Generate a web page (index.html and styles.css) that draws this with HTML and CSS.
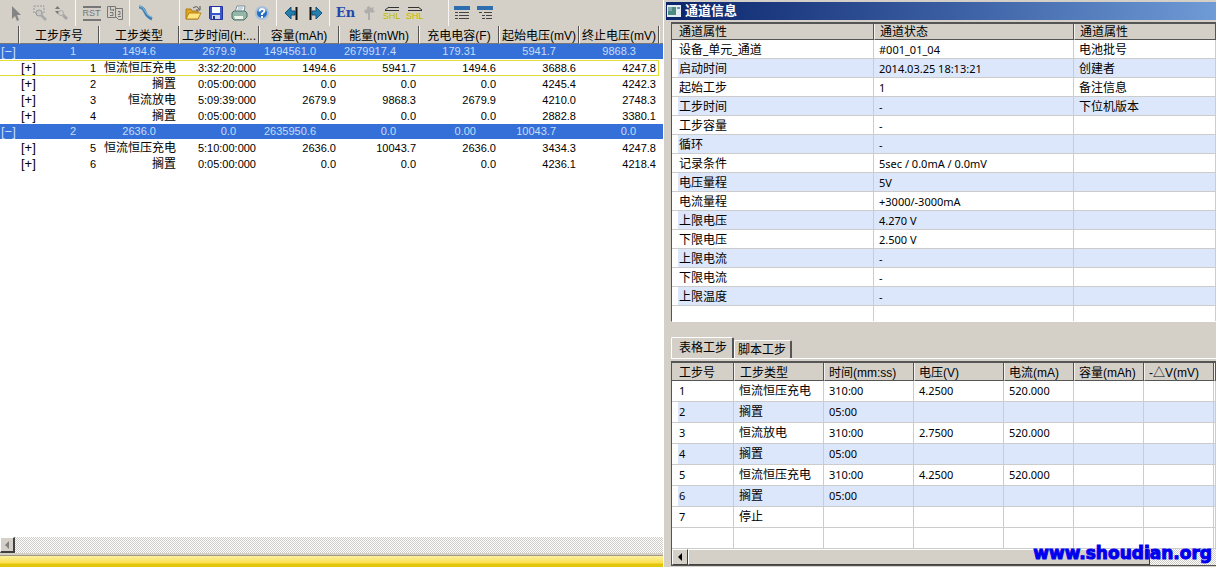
FILE: index.html
```html
<!DOCTYPE html>
<html lang="zh-CN">
<head>
<meta charset="utf-8">
<title>通道信息</title>
<link rel="stylesheet" href="styles.css">
</head>
<body>
<main class="app">
<section class="data-pane">
  <div class="toolbar">
    <div class="group g-select">
      <button aria-label="选择"><svg width="18" height="18"><path d="M5 2v13l3-3 2 5 2-1-2-5h4z" fill="#858585"/></svg></button>
      <button aria-label="区域缩放"><svg width="18" height="18"><path d="M4 2h10v7H4z" fill="none" stroke="#999" stroke-dasharray="2 1"/><circle cx="9" cy="9" r="3" fill="#c8c6c2" stroke="#999"/><path d="M11 11l5 5" stroke="#aaa" stroke-width="3"/></svg></button>
      <button aria-label="缩放"><svg width="18" height="18"><path d="M2 5l2.500-3 2.500 3zM2 7l2.500 3 2.500-3z" fill="#777"/><circle cx="8" cy="9" r="2.500" fill="#d4d0c8" stroke="#aaa"/><path d="M10 11l4 4" stroke="#a5a5a5" stroke-width="3"/></svg></button>
    </div>
    <div class="group g-reset">
      <button aria-label="RST"><span class="rst">RST</span></button>
      <button aria-label="复制"><svg width="18" height="18" fill="none" stroke="#777"><path d="M1.500 2.500h8v11h-8zM9.500 4.500h7v11h-4l-3-3M4.500 3v3H7M4 8.500h3v3H4M7.500 5v2M12 7.500h2v3h-2m0 2h3"/></svg></button>
    </div>
    <div class="group g-curve">
      <button aria-label="曲线"><svg width="18" height="18"><path d="M2 3q4 0 6 5t7 7" fill="none" stroke="#3f82b5" stroke-width="3"/><path d="M2 2q4 0 6 5t7 6" fill="none" stroke="#8dbbd8"/></svg></button>
    </div>
    <div class="group g-file">
      <button aria-label="打开"><svg width="18" height="18"><path d="M2 15V5h5l1 2h6v8z" fill="#dfa51e" stroke="#a87b20"/><path d="M2 15l3-6h12l-3 6z" fill="#ffe680" stroke="#b68318"/><path d="M9 4q4-3 6 1m1-3v4h-4" fill="none" stroke="#555"/></svg></button>
      <button aria-label="保存"><svg width="18" height="18"><path d="M2.500 2.500h13v13h-12l-1-1z" fill="#3857c9" stroke="#25349b"/><path d="M5 3h8v6H5z" fill="#fff"/><path d="M5 11h8v4H5z" fill="#cfd7ef"/><path d="M6 12h2v3H6z" fill="#253580"/></svg></button>
      <button aria-label="打印"><svg width="18" height="18"><path d="M5 8l2-6h8l-1 6z" fill="#fff" stroke="#78909a"/><path d="M2 9l2-2h11l2 2v4l-3 3H4l-2-2z" fill="#94b7a8" stroke="#4c6c69"/><path d="M4 12h9v3H5z" fill="#eef5e9"/><path d="M8 4h5M7 6h5" stroke="#95a8b8"/></svg></button>
      <button aria-label="帮助"><svg width="18" height="18"><circle cx="9" cy="9" r="6" fill="#276dc0" stroke="#a5c0dc" stroke-width="2"/><path d="M6.500 7.500q0-2.500 2.500-2.500t2.500 2q0 1-2.500 2.500V11m0 1v2" stroke="#fff" stroke-width="2" fill="none"/></svg></button>
    </div>
    <div class="group g-nav">
      <button aria-label="向左"><svg width="18" height="18"><path d="M2 9l6-6v4h4v4H8v4z" fill="#247fae" stroke="#155479"/><path d="M13.500 3v13" stroke="#111" stroke-width="2"/></svg></button>
      <button aria-label="向右"><svg width="18" height="18"><path d="M16 9l-6-6v4H6v4h4v4z" fill="#247fae" stroke="#155479"/><path d="M4.500 3v13" stroke="#111" stroke-width="2"/></svg></button>
    </div>
    <div class="group g-lang">
      <button class="en">En</button>
      <button aria-label="标记"><svg width="18" height="18"><path d="M4 7l2-2 1 1V3l2-1 2 2 3-1-1 3 2 1-2 2-3-1v8H8V9l-2 1z" fill="#b0aeaa"/></svg></button>
      <button class="shl"><svg width="16" height="6"><path d="M1 4.500h14M4 1.500h11M1 4l4-3" stroke="#333" fill="none"/></svg><span>SHL</span></button>
      <button class="shl"><svg width="16" height="6"><path d="M1 4.500h14M1 1.500h11M11 1l4 3" stroke="#333" fill="none"/></svg><span>SHL</span></button>
    </div>
    <div class="group g-view">
      <button aria-label="列表"><svg width="18" height="18"><path d="M1 2h16v4H1z" fill="#2d6eae"/><path d="M2 8.500h3m1 0h10M2 11.500h3m1 0h10M2 14.500h3m1 0h10" stroke="#444"/></svg></button>
      <button aria-label="分级列表"><svg width="18" height="18"><path d="M1 2h16v4H1z" fill="#2d6eae"/><path d="M3 8.500h3m2 0h8M6 11.500h3m1 0h6M6 14.500h3m1 0h6" stroke="#444"/></svg></button>
    </div>
  </div>
  <div class="steps-area">
  <table class="steps">
    <colgroup><col class="c-tree"><col><col><col><col><col><col><col><col><col class="c-rest"></colgroup>
    <thead><tr><th></th><th>工步序号</th><th>工步类型</th><th>工步时间(H:...</th><th>容量(mAh)</th><th>能量(mWh)</th><th>充电电容(F)</th><th>起始电压(mV)</th><th>终止电压(mV)</th><th></th></tr></thead>
    <tbody>
    <tr class="cycle"><td><button class="toggle">[−]</button></td><td>1</td><td>1494.6</td><td>2679.9</td><td>1494561.0</td><td>2679917.4</td><td>179.31</td><td>5941.7</td><td>9868.3</td><td></td></tr>
    <tr class="current"><td></td><td><button class="toggle">[+]</button>1</td><td>恒流恒压充电</td><td>3:32:20:000</td><td>1494.6</td><td>5941.7</td><td>1494.6</td><td>3688.6</td><td>4247.8</td><td></td></tr>
    <tr><td></td><td><button class="toggle">[+]</button>2</td><td>搁置</td><td>0:05:00:000</td><td>0.0</td><td>0.0</td><td>0.0</td><td>4245.4</td><td>4242.3</td><td></td></tr>
    <tr><td></td><td><button class="toggle">[+]</button>3</td><td>恒流放电</td><td>5:09:39:000</td><td>2679.9</td><td>9868.3</td><td>2679.9</td><td>4210.0</td><td>2748.3</td><td></td></tr>
    <tr><td></td><td><button class="toggle">[+]</button>4</td><td>搁置</td><td>0:05:00:000</td><td>0.0</td><td>0.0</td><td>0.0</td><td>2882.8</td><td>3380.1</td><td></td></tr>
    <tr class="cycle"><td><button class="toggle">[−]</button></td><td>2</td><td>2636.0</td><td>0.0</td><td>2635950.6</td><td>0.0</td><td>0.00</td><td>10043.7</td><td>0.0</td><td></td></tr>
    <tr><td></td><td><button class="toggle">[+]</button>5</td><td>恒流恒压充电</td><td>5:10:00:000</td><td>2636.0</td><td>10043.7</td><td>2636.0</td><td>3434.3</td><td>4247.8</td><td></td></tr>
    <tr><td></td><td><button class="toggle">[+]</button>6</td><td>搁置</td><td>0:05:00:000</td><td>0.0</td><td>0.0</td><td>0.0</td><td>4236.1</td><td>4218.4</td><td></td></tr>
    </tbody>
  </table>
  </div>
  <div class="scrollbar"><button class="scroll-btn" aria-label="向左滚动" disabled><svg width="6" height="8"><path d="M5 0v8L1 4z" fill="#808080"/></svg></button></div>
  <div class="statusbar"></div>
</section>

<section class="info-pane">
  <header class="titlebar"><svg width="14" height="12"><path d="M0 0h14v12H0z" fill="#e4eef0"/><path d="M1 2h8v8H1z" fill="#4c8c80"/><path d="M1 2h4v4H1z" fill="#7da9ad"/><path d="M10 2h3v2h-3z" fill="#6b94c0"/></svg><h1>通道信息</h1></header>
  <div class="frame props-frame">
  <table class="grid props">
    <colgroup><col class="c-prop"><col class="c-prop-value"><col></colgroup>
    <thead><tr><th>通道属性</th><th>通道状态</th><th>通道属性</th></tr></thead>
    <tbody>
    <tr><td>设备_单元_通道</td><td>#001_01_04</td><td>电池批号</td></tr>
    <tr><td>启动时间</td><td>2014.03.25 18:13:21</td><td>创建者</td></tr>
    <tr><td>起始工步</td><td>1</td><td>备注信息</td></tr>
    <tr><td>工步时间</td><td>-</td><td>下位机版本</td></tr>
    <tr><td>工步容量</td><td>-</td><td></td></tr>
    <tr><td>循环</td><td>-</td><td></td></tr>
    <tr><td>记录条件</td><td>5sec / 0.0mA / 0.0mV</td><td></td></tr>
    <tr><td>电压量程</td><td>5V</td><td></td></tr>
    <tr><td>电流量程</td><td>+3000/-3000mA</td><td></td></tr>
    <tr><td>上限电压</td><td>4.270 V</td><td></td></tr>
    <tr><td>下限电压</td><td>2.500 V</td><td></td></tr>
    <tr><td>上限电流</td><td>-</td><td></td></tr>
    <tr><td>下限电流</td><td>-</td><td></td></tr>
    <tr><td>上限温度</td><td>-</td><td></td></tr>
    <tr class="filler"><td></td><td></td><td></td></tr>
    </tbody>
  </table>
  </div>
  <div class="tabs" role="tablist"><button class="tab active" role="tab" aria-selected="true">表格工步</button><button class="tab" role="tab" aria-selected="false">脚本工步</button></div>
  <div class="frame plan-frame">
  <div class="plan-area">
  <table class="grid plan">
    <colgroup><col class="p-no"><col class="p-wide"><col class="p-wide"><col class="p-wide"><col class="p-narrow"><col class="p-narrow"><col class="p-narrow"><col></colgroup>
    <thead><tr><th>工步号</th><th>工步类型</th><th>时间(mm:ss)</th><th>电压(V)</th><th>电流(mA)</th><th>容量(mAh)</th><th>-△V(mV)</th><th></th></tr></thead>
    <tbody>
    <tr><td>1</td><td>恒流恒压充电</td><td>310:00</td><td>4.2500</td><td>520.000</td><td></td><td></td><td></td></tr>
    <tr><td>2</td><td>搁置</td><td>05:00</td><td></td><td></td><td></td><td></td><td></td></tr>
    <tr><td>3</td><td>恒流放电</td><td>310:00</td><td>2.7500</td><td>520.000</td><td></td><td></td><td></td></tr>
    <tr><td>4</td><td>搁置</td><td>05:00</td><td></td><td></td><td></td><td></td><td></td></tr>
    <tr><td>5</td><td>恒流恒压充电</td><td>310:00</td><td>4.2500</td><td>520.000</td><td></td><td></td><td></td></tr>
    <tr><td>6</td><td>搁置</td><td>05:00</td><td></td><td></td><td></td><td></td><td></td></tr>
    <tr><td>7</td><td>停止</td><td></td><td></td><td></td><td></td><td></td><td></td></tr>
    <tr class="filler"><td></td><td></td><td></td><td></td><td></td><td></td><td></td><td></td></tr>
    </tbody>
  </table>
  </div>
  <div class="scrollbar"><button class="scroll-btn" aria-label="向左滚动"><svg width="6" height="8"><path d="M5 0v8L1 4z" fill="#000"/></svg></button><div class="thumb"></div></div>
  </div>
  <div class="watermark">www.shoudian.org</div>
</section>
</main>
</body>
</html>
```

FILE: styles.css
```css
* { box-sizing: border-box; }
body { margin: 0; font: 12px/16px "Liberation Sans", "Noto Sans CJK SC", sans-serif; color: #000; background: #d4d0c8; }
button { margin: 0; padding: 0; border: 0; background: none; font: inherit; color: inherit; }
table { border-collapse: separate; border-spacing: 0; table-layout: fixed; width: 100%; }
th, td { padding: 0; font-weight: normal; white-space: nowrap; }

.app { display: grid; grid-template-columns: 663fr 553fr; height: 100vh; overflow: hidden; }
.data-pane, .info-pane { display: flex; flex-direction: column; min-width: 0; min-height: 0; }

.toolbar { display: flex; height: 26px; }
.group { display: flex; align-items: center; padding-left: 4px; border-left: 1px solid #f8f6f2; }
.group button { display: flex; align-items: center; justify-content: center; width: 23px; height: 24px; }
.g-select { border: 0; margin-right: 2px; }
.g-reset { margin-right: 3px; }
.g-curve { margin-right: 22px; }
.g-file { padding-left: 1px; margin-right: 3px; }
.g-nav { margin-right: 3px; padding-left: 3px; }
.g-lang { margin-right: 22px; }
.g-view { padding-left: 1px; }
.rst { border-top: 2px solid #777; border-bottom: 2px solid #777; font-size: 9px; line-height: 11px; color: #777; }
.group .en { font: bold 13px/16px "DejaVu Serif", serif; color: #1d4aae; }
.group .shl { flex-direction: column; font-size: 9px; line-height: 8px; color: #b5ad20; text-shadow: 0 0 1px #ffff50; }

.steps-area { flex: 1; min-height: 0; overflow: hidden; background: #fff; }
.steps col { width: 80px; }
.steps .c-tree { width: 19px; }
.steps .c-rest { width: auto; }
.steps th { height: 18px; line-height: 13px; padding-top: 3px; background: #d4d0c8; border: solid; border-width: 0 1px 1px; border-color: #555 #555 #777 #f4f2ee; text-align: center; }
.steps th:first-child { border-left: 0; }
.steps th:last-child { border-right: 0; }
.steps td { height: 16px; font-size: 11px; line-height: 16px; padding-right: 3px; text-align: right; }
.steps td:nth-child(3) { font-size: 12px; }
.steps .cycle td { background: #3470d8; color: #c9dcf8; padding-right: 23px; font-size: 11px; border-bottom: 1px solid #fff; line-height: 15px; }
.steps .cycle td:first-child { padding: 0; text-align: left; }
.steps .current td { border-top: 1px solid #e2de38; border-bottom: 1px solid #e2de38; line-height: 14px; }
.steps .current td:nth-child(9) { border-right: 1px solid #e2de38; padding-right: 2px; }
.steps .current td:last-child { border: 0; }
.toggle { float: left; font-size: 13px; line-height: 16px; margin-left: 2px; }
.current .toggle { line-height: 14px; }
.cycle .toggle { line-height: 15px; margin-left: 1px; }

.scrollbar { display: flex; height: 16px; flex: none; background: repeating-conic-gradient(#cfccc7 0 25%, #fff 0 50%) 0 0 / 2px 2px; }
.scroll-btn { display: flex; align-items: center; justify-content: center; width: 16px; height: 16px; background: #d4d0c8; border: 1px solid; border-color: #fff #404040 #404040 #fff; }
.data-pane .scroll-btn { width: 15px; border-width: 1px 2px 2px 1px; }
.thumb { width: 462px; background: #d4d0c8; border: 1px solid; border-color: #fff #404040 #404040 #fff; }
.statusbar { flex: none; height: 14px; border-top: 2px solid #d4d0c8; background: linear-gradient(#a09a80 0 1px, #fdf0a0 1px, #fbe04c 8px, #e2c60c 9px); }

.info-pane { position: relative; padding: 2px 0 1px 7px; border-left: 1px solid #fff; }
.titlebar { display: flex; align-items: center; gap: 4px; flex: none; height: 18px; margin-left: -5px; padding-left: 1px; background: linear-gradient(90deg, #0b246b, #3e62a6 55%, #6f9bd6); color: #fff; }
.titlebar h1 { margin: 0; font-size: 13px; line-height: 18px; }
.frame { border: solid #555; border-width: 2px 0 0 1px; background: #fff; overflow: hidden; }
.props-frame { flex: none; margin-top: 2px; border-bottom: 1px solid #fff; }
.grid { font: 11px/16px "Noto Sans", "Noto Sans CJK SC", sans-serif; }
.grid th { height: 16px; line-height: 13px; padding: 2px 0 0 5px; text-align: left; background: #d4d0c8; border: solid; border-width: 0 1px 1px; border-color: #555 #555 #555 #f4f2ee; }
.grid td { border: solid #ccc; border-width: 0 1px 1px 0; padding-left: 5px; }
.grid td:first-child, .grid th:first-child { padding-left: 7px; }
.grid th:first-child { border-left: 0; }
.grid tbody tr:nth-child(even):not(.filler) td { background: #dde7fb; }
.grid tbody tr:nth-child(even):not(.filler) td:first-child { background: linear-gradient(90deg, #fff 6px, #dde7fb 6px); }
.props td { height: 19px; padding-top: 1px; line-height: 17px; }
.props .filler td { height: 15px; border-bottom: 0; }
.c-prop { width: 202px; }
.c-prop-value { width: 200px; }
.props td:nth-child(odd), .plan td:nth-child(2) { font-size: 12px; }
.grid th { font-size: 12px; font-family: "Liberation Sans", "Noto Sans CJK SC", sans-serif; }
.plan th:nth-child(n+3) { padding-left: 4px; }

.tabs { display: flex; align-items: flex-end; flex: none; height: 37px; border-bottom: 1px solid #fff; }
.tab { height: 18px; padding: 0 4px 0 3px; line-height: 18px; border: solid; border-width: 1px 2px 0 1px; border-color: #fff #555 #fff #fff; border-radius: 2px 2px 0 0; }
.tab.active { height: 21px; padding: 0 5px 0 7px; }
.plan-frame { display: flex; flex-direction: column; flex: 1; min-height: 0; margin-top: 2px; border-bottom: 1px solid #555; }
.plan-area { flex: 1; min-height: 0; overflow: hidden; }
.plan th { height: 18px; line-height: 14px; padding-top: 3px; }
.plan td { height: 21px; line-height: 20px; }
.p-no { width: 62px; }
.p-wide { width: 90px; }
.p-narrow { width: 70px; }
.watermark { position: absolute; right: 4px; bottom: 4px; font: bold 17px/20px "DejaVu Sans", sans-serif; color: #00e; -webkit-text-stroke: 1px #00e; }
```
